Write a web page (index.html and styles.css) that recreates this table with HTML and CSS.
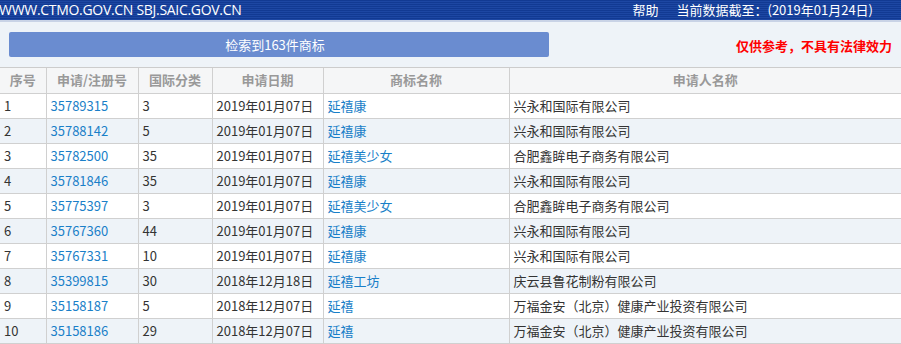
FILE: index.html
```html
<!DOCTYPE html>
<html lang="zh">
<head>
<meta charset="utf-8">
<title>商标检索</title>
<link rel="stylesheet" href="styles.css">
</head>
<body>
<div class="topbar">
  <span class="site">WWW.CTMO.GOV.CN SBJ.SAIC.GOV.CN</span>
  <span class="right"><span class="help">帮助</span><span class="date">当前数据截至：(2019年01月24日)</span></span>
</div>
<div class="panel">
  <div class="btn">检索到163件商标</div>
  <div class="warn">仅供参考，不具有法律效力</div>
</div>
<table class="grid">
  <colgroup>
    <col class="c1"><col class="c2"><col class="c3"><col class="c4"><col class="c5"><col class="c6">
  </colgroup>
  <thead>
    <tr><th>序号</th><th>申请/注册号</th><th>国际分类</th><th>申请日期</th><th>商标名称</th><th>申请人名称</th></tr>
  </thead>
  <tbody>
    <tr><td>1</td><td><a>35789315</a></td><td>3</td><td>2019年01月07日</td><td><a>延禧康</a></td><td>兴永和国际有限公司</td></tr>
    <tr class="alt"><td>2</td><td><a>35788142</a></td><td>5</td><td>2019年01月07日</td><td><a>延禧康</a></td><td>兴永和国际有限公司</td></tr>
    <tr><td>3</td><td><a>35782500</a></td><td>35</td><td>2019年01月07日</td><td><a>延禧美少女</a></td><td>合肥鑫眸电子商务有限公司</td></tr>
    <tr class="alt"><td>4</td><td><a>35781846</a></td><td>35</td><td>2019年01月07日</td><td><a>延禧康</a></td><td>兴永和国际有限公司</td></tr>
    <tr><td>5</td><td><a>35775397</a></td><td>3</td><td>2019年01月07日</td><td><a>延禧美少女</a></td><td>合肥鑫眸电子商务有限公司</td></tr>
    <tr class="alt"><td>6</td><td><a>35767360</a></td><td>44</td><td>2019年01月07日</td><td><a>延禧康</a></td><td>兴永和国际有限公司</td></tr>
    <tr><td>7</td><td><a>35767331</a></td><td>10</td><td>2019年01月07日</td><td><a>延禧康</a></td><td>兴永和国际有限公司</td></tr>
    <tr class="alt"><td>8</td><td><a>35399815</a></td><td>30</td><td>2018年12月18日</td><td><a>延禧工坊</a></td><td>庆云县鲁花制粉有限公司</td></tr>
    <tr><td>9</td><td><a>35158187</a></td><td>5</td><td>2018年12月07日</td><td><a>延禧</a></td><td>万福金安（北京）健康产业投资有限公司</td></tr>
    <tr class="alt"><td>10</td><td><a>35158186</a></td><td>29</td><td>2018年12月07日</td><td><a>延禧</a></td><td>万福金安（北京）健康产业投资有限公司</td></tr>
  </tbody>
</table>
</body>
</html>
```
FILE: styles.css
```css
html, body {
  margin: 0;
  padding: 0;
  background: #ffffff;
  font-family: "Noto Sans CJK SC", "Noto Sans", sans-serif;
  font-size: 13px;
  color: #333333;
}
.topbar {
  height: 20px;
  display: flex;
  align-items: center;
  justify-content: space-between;
  color: #ffffff;
  background: repeating-linear-gradient(to bottom, #123a93 0, #123a93 1px, #1d47a3 1px, #1d47a3 2px);
  border-bottom: 2px solid #c9d3e6;
  font-size: 13px;
  line-height: 20px;
  white-space: nowrap;
}
.site {
  font-family: "Open Sans", "Noto Sans", sans-serif;
  font-size: 14px;
  letter-spacing: -0.3px;
  margin-left: -1px;
}
.right {
  display: flex;
  gap: 18px;
  margin-right: 28px;
}
.panel {
  background: #eef3f8;
  display: flex;
  align-items: center;
  justify-content: space-between;
  padding: 0 9px;
  border-bottom: 1px solid #cccccc;
  box-sizing: border-box;
  height: 46px;
}
.btn {
  width: 540px;
  height: 25px;
  background: #6a8cd0;
  border-radius: 2px;
  color: #ffffff;
  text-align: center;
  line-height: 25px;
  font-size: 13px;
  text-indent: -8px;
}
.warn {
  color: #ff0000;
  font-weight: bold;
  font-size: 13px;
  margin-top: 1px;
}
.grid {
  width: 901px;
  border-collapse: collapse;
  table-layout: fixed;
}
.c1 { width: 46px; }
.c2 { width: 92px; }
.c3 { width: 74px; }
.c4 { width: 111px; }
.c5 { width: 186px; }
.c6 { width: 392px; }
.grid th, .grid td {
  border: 1px solid #d0d0d0;
  height: 25px;
  padding: 0 0 0 4px;
  box-sizing: border-box;
  white-space: nowrap;
  overflow: hidden;
  line-height: 22px;
}
.grid tr > :first-child { border-left: none; }
.grid tr > :last-child { border-right: none; }
.grid thead tr th { border-top: none; }
.grid th {
  background: #f5f6f7;
  color: #999999;
  font-weight: bold;
  text-align: center;
  padding: 0;
}
.grid td { text-align: left; }
.grid tr.alt td { background: #eef3f8; }
.grid a {
  color: #1a7fc8;
  text-decoration: none;
}
```
